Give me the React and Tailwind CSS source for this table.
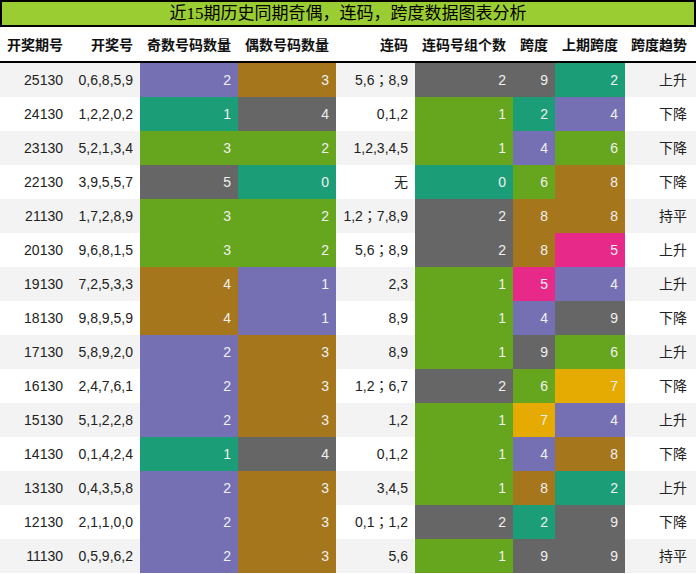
import React from 'react';

const C = {
  pu: 'bg-[#7570b3]',
  br: 'bg-[#a6761d]',
  te: 'bg-[#1b9e77]',
  gy: 'bg-[#666666]',
  gr: 'bg-[#66a61e]',
  pk: 'bg-[#e7298a]',
  go: 'bg-[#e6ab02]',
};

// [period, numbers, odd, oddColor, even, evenColor, lianma, groups, groupColor, span, spanColor, prev, prevColor, trend]
const rows = [
  ['25130', '0,6,8,5,9', 2, 'pu', 3, 'br', '5,6；8,9', 2, 'gy', 9, 'gy', 2, 'te', '上升'],
  ['24130', '1,2,2,0,2', 1, 'te', 4, 'gy', '0,1,2', 1, 'gr', 2, 'te', 4, 'pu', '下降'],
  ['23130', '5,2,1,3,4', 3, 'gr', 2, 'gr', '1,2,3,4,5', 1, 'gr', 4, 'pu', 6, 'gr', '下降'],
  ['22130', '3,9,5,5,7', 5, 'gy', 0, 'te', '无', 0, 'te', 6, 'gr', 8, 'br', '下降'],
  ['21130', '1,7,2,8,9', 3, 'gr', 2, 'gr', '1,2；7,8,9', 2, 'gy', 8, 'br', 8, 'br', '持平'],
  ['20130', '9,6,8,1,5', 3, 'gr', 2, 'gr', '5,6；8,9', 2, 'gy', 8, 'br', 5, 'pk', '上升'],
  ['19130', '7,2,5,3,3', 4, 'br', 1, 'pu', '2,3', 1, 'gr', 5, 'pk', 4, 'pu', '上升'],
  ['18130', '9,8,9,5,9', 4, 'br', 1, 'pu', '8,9', 1, 'gr', 4, 'pu', 9, 'gy', '下降'],
  ['17130', '5,8,9,2,0', 2, 'pu', 3, 'br', '8,9', 1, 'gr', 9, 'gy', 6, 'gr', '上升'],
  ['16130', '2,4,7,6,1', 2, 'pu', 3, 'br', '1,2；6,7', 2, 'gy', 6, 'gr', 7, 'go', '下降'],
  ['15130', '5,1,2,2,8', 2, 'pu', 3, 'br', '1,2', 1, 'gr', 7, 'go', 4, 'pu', '上升'],
  ['14130', '0,1,4,2,4', 1, 'te', 4, 'gy', '0,1,2', 1, 'gr', 4, 'pu', 8, 'br', '下降'],
  ['13130', '0,4,3,5,8', 2, 'pu', 3, 'br', '3,4,5', 1, 'gr', 8, 'br', 2, 'te', '上升'],
  ['12130', '2,1,1,0,0', 2, 'pu', 3, 'br', '0,1；1,2', 2, 'gy', 2, 'te', 9, 'gy', '下降'],
  ['11130', '0,5,9,6,2', 2, 'pu', 3, 'br', '5,6', 1, 'gr', 9, 'gy', 9, 'gy', '持平'],
];

const headers = ['开奖期号', '开奖号', '奇数号码数量', '偶数号码数量', '连码', '连码号组个数', '跨度', '上期跨度', '跨度趋势'];

const grid = 'grid grid-cols-[70px_70px_98px_98px_79px_98px_42px_70px_71px]';

function Plain({ children, last, tc }) {
  return (
    <div
      className={`flex items-center justify-end ${last ? 'pr-[9px]' : 'pr-[7px]'} text-[#222] whitespace-nowrap ${
        tc ? "font-['Liberation_Sans','Noto_Sans_CJK_TC',sans-serif]" : ''
      }`}
    >
      {children}
    </div>
  );
}

function Colored({ children, color }) {
  return (
    <div className={`flex items-center justify-end pr-[7px] text-[#f0f0f0] ${C[color]}`}>
      {children}
    </div>
  );
}

export default function App() {
  return (
    <div className="w-[696px] h-[574px] bg-white overflow-hidden font-['Liberation_Sans','Noto_Sans_CJK_SC',sans-serif]">
      <div className="h-[27px] border-2 border-black bg-[#9acd32] flex items-center justify-center text-[17px] text-black font-['Liberation_Serif','Noto_Sans_CJK_SC',serif] leading-none">
        近15期历史同期奇偶，连码，跨度数据图表分析
      </div>
      <div className={`${grid} h-[36px] border-b-2 border-black font-bold text-[14px] text-[#111] font-['Noto_Sans_CJK_SC',sans-serif]`}>
        {headers.map((h, i) => (
          <div key={h} className={`flex items-center justify-end ${i === 8 ? 'pr-[9px]' : 'pr-[7px]'}`}>
            {h}
          </div>
        ))}
      </div>
      {rows.map((r, i) => (
        <div key={r[0]} className={`${grid} h-[34px] text-[14px] ${i % 2 === 0 ? 'bg-[#f3f3f3]' : 'bg-white'}`}>
          <Plain>{r[0]}</Plain>
          <Plain>{r[1]}</Plain>
          <Colored color={r[3]}>{r[2]}</Colored>
          <Colored color={r[5]}>{r[4]}</Colored>
          <Plain tc>{r[6]}</Plain>
          <Colored color={r[8]}>{r[7]}</Colored>
          <Colored color={r[10]}>{r[9]}</Colored>
          <Colored color={r[12]}>{r[11]}</Colored>
          <Plain last>{r[13]}</Plain>
        </div>
      ))}
    </div>
  );
}
